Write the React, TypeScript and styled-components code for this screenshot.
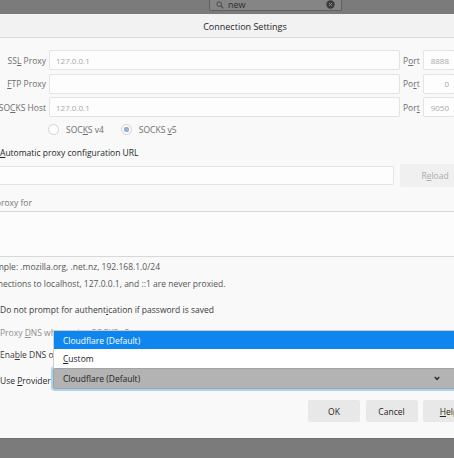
import React from 'react';
import styled, { createGlobalStyle } from 'styled-components';

const GlobalStyle = createGlobalStyle`
  html, body {
    margin: 0;
    padding: 0;
    background: #7b7b7b;
    overflow: hidden;
  }
  body {
    font-family: "Open Sans", "Noto Sans", sans-serif;
  }
`;

const ChevronDown = () => (
  <svg width="6" height="5" viewBox="0 0 6 5">
    <path d="M0.8 1 L3 3.4 L5.2 1" fill="none" stroke="#2a2a2a" strokeWidth="1.5" />
  </svg>
);

const SearchGlyph = () => (
  <svg width="8" height="8" viewBox="0 0 8 8">
    <circle cx="3.2" cy="3.2" r="2.3" fill="none" stroke="#4a4a4a" strokeWidth="1" />
    <path d="M5 5 L7.4 7.4" stroke="#4a4a4a" strokeWidth="1.1" />
  </svg>
);

const ClearGlyph = () => (
  <svg width="9" height="9" viewBox="0 0 9 9">
    <circle cx="4.5" cy="4.5" r="4.2" fill="#3c3c3c" />
    <path d="M3 3 L6 6 M6 3 L3 6" stroke="#8a8a8a" strokeWidth="1" />
  </svg>
);

const App: React.FC = () => {
  return (
    <Page>
      <GlobalStyle />
      <TopStrip>
        <SearchBox>
          <SearchGlyph />
          <SearchText>new</SearchText>
          <ClearSlot>
            <ClearGlyph />
          </ClearSlot>
        </SearchBox>
      </TopStrip>

      <Dialog>
        <TitleBar>Connection Settings</TitleBar>
        <Body>
          <ProxyGrid>
            <FieldLabel>
              SS<u>L</u> Proxy
            </FieldLabel>
            <TextInput readOnly defaultValue="127.0.0.1" />
            <PortLabel>
              P<u>o</u>rt
            </PortLabel>
            <PortInput readOnly defaultValue="8888" />

            <FieldLabel>
              <u>F</u>TP Proxy
            </FieldLabel>
            <TextInput readOnly defaultValue="" />
            <PortLabel>
              Po<u>r</u>t
            </PortLabel>
            <PortInput readOnly defaultValue="0" />

            <FieldLabel>
              SO<u>C</u>KS Host
            </FieldLabel>
            <TextInput readOnly defaultValue="127.0.0.1" />
            <PortLabel>
              Por<u>t</u>
            </PortLabel>
            <PortInput readOnly defaultValue="9050" />
          </ProxyGrid>

          <RadioRow>
            <RadioItem>
              <Radio />
              <span>
                SOC<u>K</u>S v4
              </span>
            </RadioItem>
            <RadioItem>
              <Radio $checked />
              <span>
                SOCKS <u>v</u>5
              </span>
            </RadioItem>
          </RadioRow>

          <OptionRow>
            <Radio />
            <span>
              <u>A</u>utomatic proxy configuration URL
            </span>
          </OptionRow>

          <UrlRow>
            <UrlInput readOnly defaultValue="" />
            <Button $disabled $width={70} $height={23}>
              R<u>e</u>load
            </Button>
          </UrlRow>

          <NoProxyLabel>
            <u>N</u>o proxy for
          </NoProxyLabel>
          <NoProxyArea readOnly defaultValue="" />

          <Hint $first>Example: .mozilla.org, .net.nz, 192.168.1.0/24</Hint>
          <Hint>Connections to localhost, 127.0.0.1, and ::1 are never proxied.</Hint>

          <CheckRow $top={8}>
            <Checkbox />
            <span>
              Do not prompt for authent<u>i</u>cation if password is saved
            </span>
          </CheckRow>
          <CheckRow $top={5} $disabled>
            <Checkbox />
            <span>
              Proxy <u>D</u>NS when using SOCKS v5
            </span>
          </CheckRow>
          <CheckRow $top={4}>
            <Checkbox />
            <span>
              Ena<u>b</u>le DNS over HTTPS
            </span>
          </CheckRow>

          <ProviderRow>
            <ProviderLabel>
              Use <u>P</u>rovider
            </ProviderLabel>
            <SelectWrap>
              <Menu>
                <MenuItem $selected>Cloudflare (Default)</MenuItem>
                <MenuItem>
                  <u>C</u>ustom
                </MenuItem>
              </Menu>
              <SelectBox>
                <span>Cloudflare (Default)</span>
                <ChevronDown />
              </SelectBox>
            </SelectWrap>
          </ProviderRow>
        </Body>

        <Footer>
          <Button>OK</Button>
          <Button>Cancel</Button>
          <Button>
            <u>H</u>elp
          </Button>
        </Footer>
      </Dialog>
    </Page>
  );
};

export default App;

/* ----------------------- */
/* Styled Components       */
/* ----------------------- */

const Page = styled.div`
  width: 454px;
  height: 458px;
  overflow: hidden;
  background: #7b7b7b;
  font-size: 8.5px;
  color: #2a2a2a;
`;

const TopStrip = styled.div`
  height: 14px;
  display: flex;
  align-items: flex-start;
  padding-left: 209px;
  box-sizing: border-box;
`;

const SearchBox = styled.div`
  width: 133px;
  height: 12px;
  margin-top: -1px;
  box-sizing: border-box;
  border: 1px solid #5f5f5f;
  border-top: none;
  border-radius: 0 0 2px 2px;
  background: #858585;
  display: flex;
  align-items: center;
  gap: 4px;
  padding: 0 6px 0 6px;
`;

const SearchText = styled.span`
  color: #2e2e2e;
  font-size: 9px;
`;

const ClearSlot = styled.span`
  margin-left: auto;
  display: flex;
`;

const Dialog = styled.div`
  margin-left: -30px;
  width: 520px;
  background: #f9f9f9;
  display: flex;
  flex-direction: column;
  border-bottom: 1px solid #727272;
`;

const TitleBar = styled.div`
  height: 24px;
  display: flex;
  align-items: center;
  justify-content: center;
  padding-left: 30px;
  padding-top: 1px;
  box-sizing: border-box;
  background: #f2f2f2;
  border-bottom: 1px solid #d9d9d9;
  color: #262626;
  font-size: 9px;
`;

const Body = styled.div`
  display: flex;
  flex-direction: column;
  padding: 12px 34px 0 12px;
`;

const ProxyGrid = styled.div`
  display: grid;
  grid-template-columns: 64px 351px 17px 32px;
  column-gap: 3px;
  row-gap: 3.5px;
  align-items: center;
`;

const FieldLabel = styled.span`
  text-align: right;
  white-space: nowrap;
  color: #6e6e6e;
`;

const PortLabel = styled.span`
  color: #6e6e6e;
`;

const TextInput = styled.input`
  height: 20px;
  box-sizing: border-box;
  border: 1px solid #e3e3e3;
  border-radius: 2px;
  background: #fdfdfd;
  padding: 0 6px;
  font-family: inherit;
  font-size: 8px;
  color: #a8a8a8;
  outline: none;
`;

const PortInput = styled(TextInput)`
  width: 32px;
  text-align: right;
  padding: 0 5px;
`;

const RadioRow = styled.div`
  height: 24px;
  display: flex;
  align-items: center;
  gap: 17px;
  padding-left: 66px;
  color: #6e6e6e;
`;

const RadioItem = styled.label`
  display: flex;
  align-items: center;
  gap: 7px;
`;

const Radio = styled.span<{ $checked?: boolean }>`
  width: 11px;
  height: 11px;
  box-sizing: border-box;
  border-radius: 50%;
  border: 1px solid #d4d4d4;
  background: ${(p) =>
    p.$checked ? 'radial-gradient(circle, #98b4d2 0 2.5px, #fafafa 3px)' : '#fdfdfd'};
  flex: 0 0 auto;
`;

const OptionRow = styled.label`
  height: 18px;
  margin-top: 2px;
  display: flex;
  align-items: center;
  gap: 5px;
  color: #262626;
  ${Radio} {
    width: 13px;
    height: 13px;
  }
`;

const UrlRow = styled.div`
  height: 23px;
  margin-top: 3px;
  display: flex;
  align-items: center;
  gap: 6px;
`;

const UrlInput = styled(TextInput)`
  flex: 0 0 412px;
  height: 19px;
`;

const Button = styled.button<{ $disabled?: boolean; $width?: number; $height?: number }>`
  width: ${(p) => p.$width ?? 52}px;
  height: ${(p) => p.$height ?? 22}px;
  border: none;
  border-radius: 2px;
  background: ${(p) => (p.$disabled ? '#f0f0f0' : '#e8e8e8')};
  color: ${(p) => (p.$disabled ? '#ababab' : '#262626')};
  font-family: inherit;
  font-size: 8.5px;
  padding: 0;
  flex: 0 0 auto;
`;

const NoProxyLabel = styled.div`
  height: 16px;
  line-height: 16px;
  margin-top: 8px;
  color: #777;
`;

const NoProxyArea = styled.textarea`
  height: 46px;
  box-sizing: border-box;
  border: 1px solid #d8d8d8;
  background: #fdfcfc;
  resize: none;
  outline: none;
  padding: 0;
`;

const Hint = styled.div<{ $first?: boolean }>`
  line-height: 17px;
  margin-top: ${(p) => (p.$first ? 1 : 0)}px;
  color: #555;
  white-space: nowrap;
`;

const CheckRow = styled.label<{ $top: number; $disabled?: boolean }>`
  height: 18px;
  margin-top: ${(p) => p.$top}px;
  display: flex;
  align-items: center;
  gap: 5px;
  white-space: nowrap;
  color: ${(p) => (p.$disabled ? '#8e8e8e' : '#3a3a3a')};
`;

const Checkbox = styled.span`
  width: 13px;
  height: 13px;
  box-sizing: border-box;
  border: 1px solid #c8c8c8;
  border-radius: 2px;
  background: #fdfdfd;
  flex: 0 0 auto;
`;

const ProviderRow = styled.div`
  height: 24px;
  margin-top: 5px;
  display: flex;
  align-items: center;
  padding-left: 18px;
`;

const ProviderLabel = styled.span`
  flex: 0 0 53px;
  color: #2a2a2a;
  white-space: nowrap;
`;

const SelectWrap = styled.div`
  position: relative;
  flex: 1;
  align-self: flex-start;
`;

const SelectBox = styled.div`
  height: 21px;
  box-sizing: border-box;
  border: 1px solid #a3a3a3;
  border-radius: 2px;
  background: #b3b3b3;
  box-shadow: 0 0 0 2px #a8d5f3;
  display: flex;
  align-items: center;
  justify-content: space-between;
  padding: 0 15px 0 9px;
  color: #222;
`;

const Menu = styled.div`
  position: absolute;
  left: 0;
  right: 0;
  bottom: 100%;
  z-index: 2;
  background: #fff;
  border: 1px solid #cdcdcd;
  border-bottom: none;
`;

const MenuItem = styled.div<{ $selected?: boolean }>`
  height: ${(p) => (p.$selected ? 18 : 19)}px;
  display: flex;
  align-items: center;
  padding-left: 9px;
  background: ${(p) => (p.$selected ? '#0f86ef' : '#fff')};
  color: ${(p) => (p.$selected ? '#fff' : '#222')};
`;

const Footer = styled.div`
  display: flex;
  justify-content: flex-end;
  gap: 5.5px;
  padding: 8px 15px 16px 0;
`;
